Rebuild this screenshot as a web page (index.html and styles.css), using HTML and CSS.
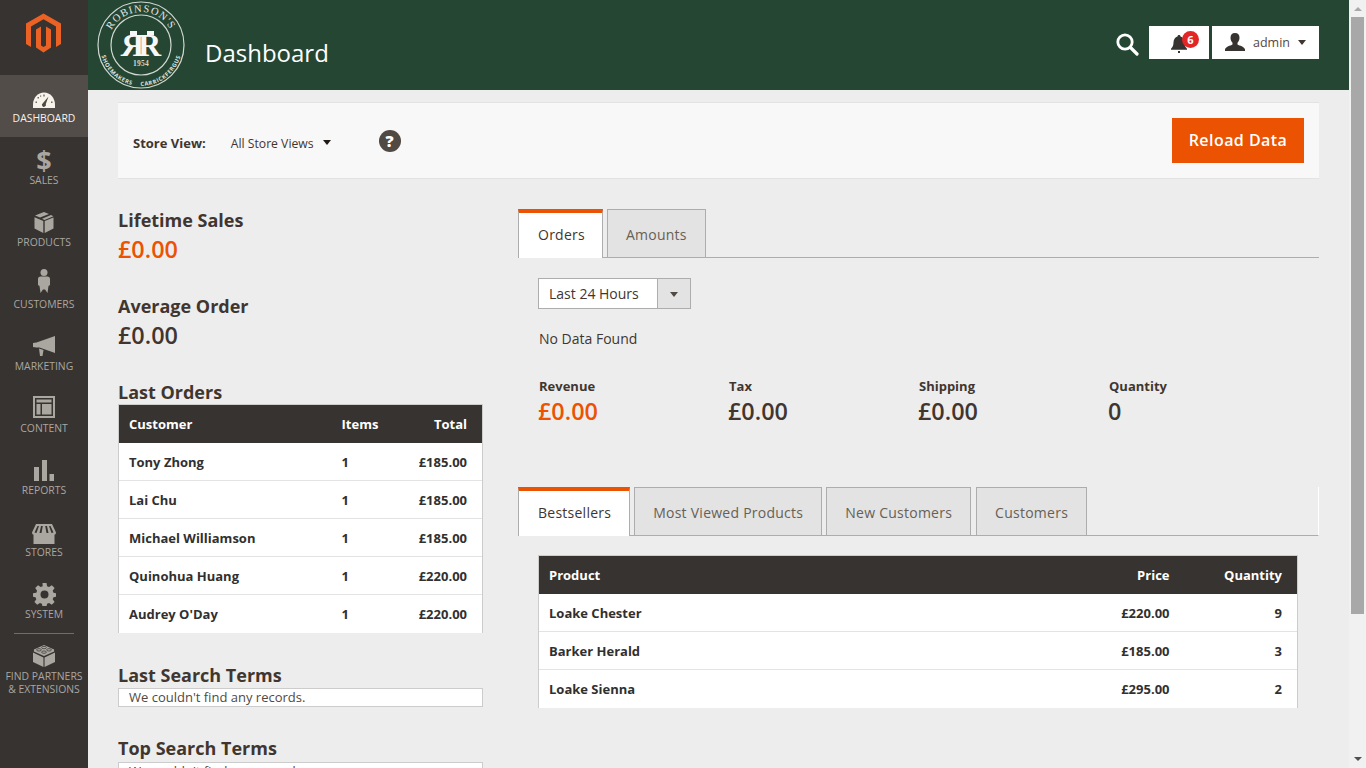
FILE: index.html
```html
<!DOCTYPE html>
<html lang="en">
<head>
<meta charset="utf-8">
<title>Dashboard</title>
<link rel="stylesheet" href="styles.css">
</head>
<body>
<div class="app">
  <nav class="sidebar">
    <a class="brand" aria-label="Magento">
      <svg width="36" height="42" viewBox="27 11 36 42"><path class="mlogo" d="M44.5 12.5 62 22.6V43l-5 2.9V25.5L44.5 18.3 32 25.5v20.4L27 43V22.6Z"/><path class="mlogo" d="M37 28.4l5-2.9v19l2.5 1.5 2.5-1.500v-19l5 2.900v18l-7.500 5.100L37 46.400Z"/></svg>
    </a>
    <a class="nav-item active">
      <span class="nav-icon"><svg class="gauge" width="24" height="18" viewBox="0 0 24 18"><path fill="#f7f3eb" d="M1 17V13.500C1 7 5.800 1.500 12 1.500S23 7 23 13.500V17Z"/><g fill="#6d6762"><rect x="11.300" y="3.500" width="1.400" height="2"/><rect x="5.500" y="6" width="1.500" height="1.500"/><rect x="3.500" y="10.500" width="1.500" height="1.500"/><rect x="19" y="10.500" width="1.500" height="1.500"/><rect x="8" y="4.500" width="1.200" height="1.200"/></g><path fill="#514943" d="M16.500 5.500 13.800 13a2 2 0 1 1-3-.8Z"/></svg></span>
      <span class="nav-label">Dashboard</span>
    </a>
    <a class="nav-item">
      <span class="nav-icon"><span class="dollar">$</span></span>
      <span class="nav-label">Sales</span>
    </a>
    <a class="nav-item">
      <span class="nav-icon"><svg width="20" height="21" viewBox="0 0 20 21"><path class="ico" d="M10 0 15 2 6 5.500 1 3.500ZM17 3 19.500 4.300 10.500 8 8 6.800ZM.5 5.200 9.300 9V21L.5 16.500ZM19.500 5.500V16.500L10.700 21V9Z"/></svg></span>
      <span class="nav-label">Products</span>
    </a>
    <a class="nav-item">
      <span class="nav-icon"><svg class="person" width="12" height="24" viewBox="0 0 12 24"><circle class="ico" cx="6" cy="3.500" r="3.500"/><path class="ico" d="M2.500 7.500h7C11 7.500 12 8.500 12 10V16L10.500 17 9.500 24 7 20.500H5L2.500 24 1.500 17 0 16V10C0 8.500 1 7.500 2.500 7.500Z"/></svg></span>
      <span class="nav-label">Customers</span>
    </a>
    <a class="nav-item">
      <span class="nav-icon"><svg width="22" height="20" viewBox="0 0 22 20"><path class="ico" d="M22 0V17L6.500 11.500H3.500L0 11V7L3.500 6.500ZM6 12.500 10.500 14 9.500 20H7Z"/></svg></span>
      <span class="nav-label">Marketing</span>
    </a>
    <a class="nav-item">
      <span class="nav-icon"><svg class="layout" width="22" height="22" viewBox="0 0 22 22"><path class="ico" fill-rule="evenodd" d="M0 0H22V22H0ZM2 2V20H20V2ZM3.500 3.500H18.500V6.500H3.500ZM3.500 8H7.500V18.500H3.500ZM9 8H18.500V18.500H9Z"/></svg></span>
      <span class="nav-label">Content</span>
    </a>
    <a class="nav-item">
      <span class="nav-icon"><svg width="20" height="21" viewBox="0 0 20 21"><rect class="ico" y="7" width="5" height="14"/><rect class="ico" x="8" width="5" height="21"/><rect class="ico" x="15.500" y="14" width="4.500" height="7"/></svg></span>
      <span class="nav-label">Reports</span>
    </a>
    <a class="nav-item">
      <span class="nav-icon"><svg class="shop" width="24" height="20" viewBox="0 0 24 20"><path class="ico" fill-rule="evenodd" d="M4 0H20L24 8.500C24 10 23 10.700 22.500 10.800V20H1.500V10.800C1 10.700 0 10 0 8.500ZM5.500 2 2.500 8.500 4.500 9 7 2ZM9 2 7.500 9H9.500L10.800 2ZM13.200 2 14.500 9H16.500L15 2ZM17 2 19.500 9 21.500 8.500 18.500 2Z"/></svg></span>
      <span class="nav-label">Stores</span>
    </a>
    <a class="nav-item">
      <span class="nav-icon"><svg width="23" height="23" viewBox="0 0 23 23"><path class="ico" fill-rule="evenodd" d="M9.500 0h4l.6 3.300 2 .8L18.800 2.200l2.800 2.800-1.900 2.700.8 2L23 10.300v3.400l-2.500.6-.8 2 1.900 2.700-2.800 2.800-2.700-1.900-2 .8-.6 2.800h-4l-.6-2.800-2-.8-2.700 1.900-2.800-2.800 1.900-2.700-.8-2L0 13.700v-3.400l3.300-.6.800-2L2.200 5 5 2.200l2.700 1.900 2-.8ZM11.500 7.500a4 4 0 1 0 0 8 4 4 0 0 0 0-8Z"/></svg></span>
      <span class="nav-label">System</span>
    </a>
    <div class="nav-divider"></div>
    <a class="nav-item partners">
      <span class="nav-icon"><svg width="22" height="22" viewBox="0 0 24 24"><path class="ico" d="M12 0 23 5V7L12 12 1 7V5ZM0 8.300 11.400 13.500V24L0 18.500ZM24 8.300V18.500L12.600 24V13.500Z"/><g fill="none" stroke="#373330" stroke-width=".8"><ellipse cx="12" cy="2.800" rx="2.600" ry="1.300"/><ellipse cx="6.500" cy="5.300" rx="2.600" ry="1.300"/><ellipse cx="17.500" cy="5.300" rx="2.600" ry="1.300"/><ellipse cx="12" cy="7.800" rx="2.600" ry="1.300"/></g></svg></span>
      <span class="nav-label">Find Partners<br>&amp; Extensions</span>
    </a>
  </nav>

  <div class="page">
    <header class="topbar">
      <svg class="logo" width="90" height="90" viewBox="0 0 90 90" role="img" aria-label="Robinson's logo">
        <defs>
          <path id="arcTop" d="M11 45a33 33 0 0 1 66 0"/>
          <path id="arcBot" d="M3 45a41 41 0 0 0 82 0"/>
        </defs>
        <circle cx="44" cy="45" r="43" class="ring"/>
        <circle cx="44" cy="45" r="30" class="ring"/>
        <text class="logo-top"><textPath href="#arcTop" startOffset="50%" text-anchor="middle">ROBINSON'S</textPath></text>
        <text class="logo-bot"><textPath href="#arcBot" startOffset="50%" text-anchor="middle">SHOEMAKERS&#160;&#160;&#160;&#160;CARRICKFERGUS</textPath></text>
        <text class="logo-rr" transform="translate(47 56) scale(-1 1)">R</text>
        <text class="logo-rr" x="41" y="56">R</text>
        <rect class="logo-cap" x="33" y="31" width="7" height="4.500"/>
        <rect class="logo-cap" x="50" y="31" width="7" height="4.500"/>
        <text class="logo-year" x="44" y="66" text-anchor="middle">1954</text>
      </svg>
      <h1 class="title">Dashboard</h1>
      <div class="actions">
        <svg class="search" width="24" height="24" viewBox="0 0 24 24"><circle cx="10" cy="10" r="7.200" fill="none" stroke="#fff" stroke-width="2.800"/><path d="M15.500 15.500 22 22" stroke="#fff" stroke-width="3.200" stroke-linecap="round"/></svg>
        <div class="notify">
          <svg class="bell" width="16" height="18" viewBox="0 0 16 18"><path fill="#373330" d="M8 0C9 0 9.500.6 9.500 1.500 12 2.300 13.500 4.500 13.500 7.500c0 3 1 4.800 2.500 6.200v1H0v-1C1.500 12.300 2.500 10.500 2.500 7.500c0-3 1.500-5.200 4-6C6.500.6 7 0 8 0Z"/><rect fill="#373330" x="7" y="16" width="2" height="2"/></svg>
          <span class="badge">6</span>
        </div>
        <div class="user">
          <svg width="20" height="18" viewBox="0 0 20 18"><path fill="#373330" d="M10 0c3 0 4.500 2 4.500 4.800 0 2-.8 3.800-2 5v1.700c2 1.300 7 2 7.500 5V18H0v-1.500c.5-3 5.500-3.700 7.500-5V9.800c-1.200-1.200-2-3-2-5C5.500 2 7 0 10 0Z"/></svg>
          <span class="user-name">admin</span>
          <span class="caret"></span>
        </div>
      </div>
    </header>

    <main class="content">
      <section class="store-bar">
        <span class="store-label">Store View:</span>
        <span class="store-value">All Store Views</span>
        <span class="caret dark"></span>
        <span class="help">?</span>
        <button class="reload">Reload Data</button>
      </section>

      <div class="columns">
        <div class="col-left">
          <h3 class="metric-title">Lifetime Sales</h3>
          <div class="metric-value orange">£0.00</div>
          <h3 class="metric-title second">Average Order</h3>
          <div class="metric-value">£0.00</div>
          <h3 class="block-title orders-title">Last Orders</h3>
          <table class="grid orders">
            <thead><tr><th class="c-name">Customer</th><th>Items</th><th class="num">Total</th></tr></thead>
            <tbody>
              <tr><td>Tony Zhong</td><td>1</td><td class="num">£185.00</td></tr>
              <tr><td>Lai Chu</td><td>1</td><td class="num">£185.00</td></tr>
              <tr><td>Michael Williamson</td><td>1</td><td class="num">£185.00</td></tr>
              <tr><td>Quinohua Huang</td><td>1</td><td class="num">£220.00</td></tr>
              <tr><td>Audrey O'Day</td><td>1</td><td class="num">£220.00</td></tr>
            </tbody>
          </table>
          <h3 class="block-title search-title">Last Search Terms</h3>
          <div class="empty">We couldn't find any records.</div>
          <h3 class="block-title search-title next">Top Search Terms</h3>
          <div class="empty">We couldn't find any records.</div>
        </div>

        <div class="col-right">
          <ul class="tabs upper">
            <li class="tab current">Orders</li>
            <li class="tab">Amounts</li>
          </ul>
          <div class="range">
            <span class="range-text">Last 24 Hours</span>
            <span class="range-btn"><span class="caret small"></span></span>
          </div>
          <p class="nodata">No Data Found</p>
          <div class="stats">
            <div class="stat"><div class="stat-label">Revenue</div><div class="stat-value orange">£0.00</div></div>
            <div class="stat"><div class="stat-label">Tax</div><div class="stat-value">£0.00</div></div>
            <div class="stat"><div class="stat-label">Shipping</div><div class="stat-value">£0.00</div></div>
            <div class="stat"><div class="stat-label">Quantity</div><div class="stat-value">0</div></div>
          </div>
          <ul class="tabs lower">
            <li class="tab current">Bestsellers</li>
            <li class="tab">Most Viewed Products</li>
            <li class="tab">New Customers</li>
            <li class="tab">Customers</li>
          </ul>
          <table class="grid best">
            <thead><tr><th>Product</th><th class="num c-price">Price</th><th class="num c-qty">Quantity</th></tr></thead>
            <tbody>
              <tr><td>Loake Chester</td><td class="num">£220.00</td><td class="num">9</td></tr>
              <tr><td>Barker Herald</td><td class="num">£185.00</td><td class="num">3</td></tr>
              <tr><td>Loake Sienna</td><td class="num">£295.00</td><td class="num">2</td></tr>
            </tbody>
          </table>
        </div>
      </div>
    </main>
  </div>

  <div class="scrollbar" aria-hidden="true">
    <span class="sb-arrow up"></span>
    <span class="sb-thumb"></span>
    <span class="sb-arrow down"></span>
  </div>
</div>
</body>
</html>
```
FILE: styles.css
```css
* { box-sizing: border-box; }
html, body { margin: 0; height: 100%; overflow: hidden; }
body { font-family: "Open Sans", sans-serif; font-size: 14px; color: #41362f; background: #ededed; }
.app { display: flex; height: 768px; overflow: hidden; }

/* sidebar */
.sidebar { width: 88px; flex: none; background: #373330; display: flex; flex-direction: column; }
.brand { height: 75px; flex: none; display: flex; justify-content: center; padding-top: 12px; }
.mlogo { fill: #ec6224; }
.nav-item { height: 62px; flex: none; display: flex; flex-direction: column; align-items: center; padding-top: 10px; color: #aaa6a0; }
.nav-item.active { background: #524d49; color: #f7f3eb; }
.nav-icon { height: 26px; flex: none; display: flex; align-items: center; justify-content: center; }
.ico { fill: #aaa6a0; }
.gauge { margin-top: 3px; }
.person { margin-top: -6px; }
.layout { margin-top: -2px; }
.shop { margin-top: 3px; }
.dollar { font-size: 27px; font-weight: 700; line-height: 26px; color: #aaa6a0; }
.nav-label { font-size: 10.400px; line-height: 13px; margin-top: 1px; text-transform: uppercase; text-align: center; white-space: nowrap; }
.nav-divider { height: 1px; flex: none; background: #736d68; margin: 0 14px; }
.partners { height: 70px; padding-top: 9px; }

/* page */
.page { flex: 1; min-width: 0; display: flex; flex-direction: column; }
.topbar { height: 90px; flex: none; background: #254632; display: flex; align-items: center; padding-right: 30px; color: #fff; }
.logo { flex: none; margin-left: 9px; }
.ring { fill: none; stroke: #cfd8d2; stroke-width: 1.200; }
.logo-top { font-family: "Liberation Serif", serif; font-size: 10.500px; letter-spacing: 1.100px; fill: #e3e8e4; }
.logo-bot { font-family: "Open Sans", sans-serif; font-size: 5.700px; font-weight: 700; letter-spacing: .6px; fill: #dfe5e1; }
.logo-rr { font-family: "Liberation Serif", serif; font-size: 32px; font-weight: 700; fill: #f7f7f7; }
.logo-cap { fill: #f7f7f7; }
.logo-year { font-family: "Liberation Serif", serif; font-size: 7.500px; font-weight: 700; letter-spacing: .3px; fill: #cfd6d1; }
.title { font-size: 24px; font-weight: 400; line-height: 32px; margin: 15px 0 0 18px; color: #fff; }
.actions { margin-left: auto; display: flex; align-items: center; height: 33px; position: relative; top: -3px; }
.search { margin-right: 10px; margin-top: 4px; }
.notify { width: 60px; height: 33px; background: #fff; position: relative; display: flex; align-items: center; padding-left: 22px; }
.bell { margin-top: 3px; }
.badge { position: absolute; left: 33px; top: 5px; width: 17px; height: 17px; border-radius: 50%; background: #e22626; color: #fff; font-size: 11px; font-weight: 700; line-height: 17px; text-align: center; }
.user { width: 107px; height: 33px; margin-left: 3px; background: #fff; display: flex; align-items: center; padding-left: 13px; }
.user-name { font-size: 12.500px; margin-left: 8px; color: #514943; }
.caret { display: inline-block; width: 0; height: 0; border-left: 4px solid transparent; border-right: 4px solid transparent; border-top: 5px solid #41362f; }
.user .caret { margin-left: 8px; margin-top: 1px; }

/* content */
.content { flex: 1; padding: 12px 30px 0; min-height: 0; }
.store-bar { height: 77px; background: #f8f8f8; border-top: 1px solid #e3e3e3; border-bottom: 1px solid #e3e3e3; display: flex; align-items: center; padding: 0 15px; }
.store-label { font-weight: 700; font-size: 13px; color: #41362f; margin-top: 5px; }
.store-value { font-size: 12.200px; margin: 5px 0 0 25px; color: #41362f; }
.caret.dark { margin: 4px 0 0 9px; border-top-color: #1f1a17; }
.help { width: 22px; height: 22px; border-radius: 50%; background: #514943; color: #fff; font-weight: 800; font-size: 16px; line-height: 22px; text-align: center; margin: 0 0 0 48px; }
.reload { margin-left: auto; width: 132px; height: 45px; border: 0; background: #eb5202; color: #fff; font-family: inherit; font-size: 16px; font-weight: 600; letter-spacing: .45px; padding: 0 0 2px; }

.columns { display: flex; }
.col-left { width: 365px; flex: none; padding-top: 29px; }
.col-right { width: 801px; margin-left: 35px; padding-top: 30px; flex: none; }

.metric-title, .block-title { margin: 0; font-size: 18px; font-weight: 700; line-height: 25px; color: #41362f; }
.metric-value { font-size: 23.400px; font-weight: 600; line-height: 32px; color: #41362f; }
.stat-value { font-size: 23.400px; font-weight: 600; line-height: 32px; color: #41362f; margin-top: -1px; }
.orange { color: #eb5202; }
.metric-title.second { margin-top: 29px; }
.orders-title { margin-top: 29px; height: 24px; line-height: 24px; }
.search-title { margin-top: 29px; height: 26px; line-height: 26px; }
.search-title.next { margin-top: 28px; height: 27px; }

/* tables */
.grid { border-collapse: collapse; table-layout: fixed; background: #fff; font-size: 13px; }
.grid th { height: 38px; background: #373330; color: #fff; font-weight: 700; text-align: left; padding: 0 0 0 10px; border-top: 1px solid #ccc; }
.grid th:first-child { border-left: 1px solid #ccc; }
.grid th:last-child { border-right: 1px solid #ccc; }
.grid td { height: 38px; font-weight: 700; color: #303030; padding: 0 0 0 10px; border-top: 1px solid #e3e3e3; border-left: 1px solid #ccc; border-right: 1px solid #ccc; }
.grid td + td { border-left: 0; }
.grid td:not(:last-child) { border-right: 0; }
.grid tr:first-child td { border-top: 0; padding-top: 2px; }
.grid .num { text-align: right; padding-right: 15px; padding-left: 0; }
.orders { width: 365px; }
.orders .c-name { width: 213px; }
.orders th:nth-child(2) { width: 75px; }
.best { width: 760px; margin-left: 20px; margin-top: 19px; }
.best .c-price { width: 130px; }
.best .c-qty { width: 113px; }
.empty { height: 19px; background: #fff; border: 1px solid #ccc; padding: 0 10px; font-size: 13px; line-height: 16px; color: #514943; }

/* tabs */
.tabs { list-style: none; margin: 0; padding: 0; display: flex; gap: 4px; border-bottom: 1px solid #adadad; height: 49px; }
.tab { height: 49px; padding: 0 18px; border: 1px solid #adadad; background: #e3e3e3; color: #676056; font-size: 14px; letter-spacing: .25px; line-height: 49px; white-space: nowrap; }
.tab.current { background: #fff; color: #41362f; font-weight: 500; padding: 0 18px 0 19px; border-top: 4px solid #eb5202; border-bottom: 0; line-height: 44px; border-color: #eb5202 #adadad #fff; height: 49px; }
.upper .tab.current { padding-right: 17px; }
.tabs.lower { margin-top: 60px; border-right: 1px solid #fff; }
.lower .tab:last-child { margin-left: 1px; }

.range { display: flex; margin: 20px 0 0 20px; width: 153px; height: 31px; border: 1px solid #adadad; background: #fff; }
.range-text { flex: 1; padding-left: 10px; line-height: 29px; font-size: 14px; color: #41362f; }
.range-btn { width: 33px; background: #e3e3e3; border-left: 1px solid #adadad; display: flex; align-items: center; justify-content: center; }
.caret.small { border-top-color: #514943; margin-top: 2px; }
.nodata { margin: 20px 0 0 21px; line-height: 20px; font-size: 14px; color: #41362f; }
.stats { display: flex; margin: 27px 0 0 20px; }
.stat { width: 190px; }
.stat-label { font-weight: 700; font-size: 13px; line-height: 20px; padding-left: 1px; color: #41362f; }

/* fake scrollbar */
.scrollbar { width: 17px; flex: none; background: #f1f1f1; display: flex; flex-direction: column; align-items: center; }
.sb-thumb { width: 13px; height: 597px; background: #a8a8a8; flex: none; }
.sb-arrow { width: 0; height: 0; border-left: 4px solid transparent; border-right: 4px solid transparent; flex: none; }
.sb-arrow.up { border-bottom: 4px solid #a8a8a8; margin: 7px 0 6px; }
.sb-arrow.down { border-top: 4px solid #505050; margin-top: auto; margin-bottom: 7px; }
```
